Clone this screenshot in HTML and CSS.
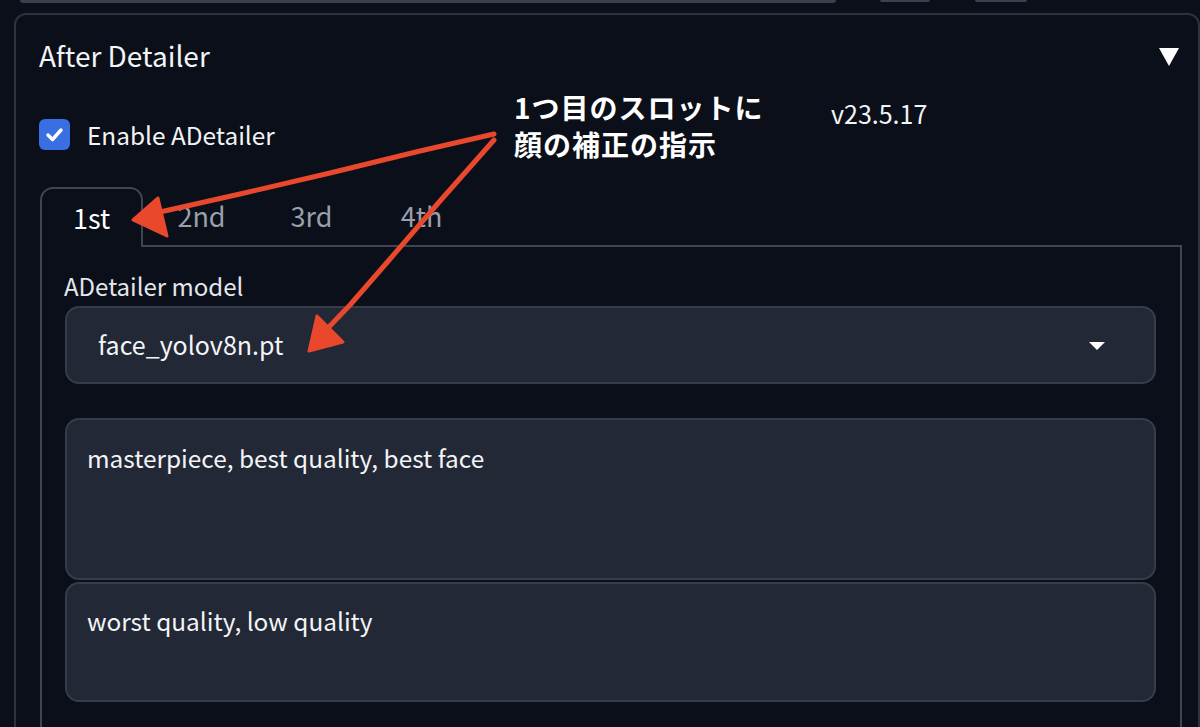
FILE: index.html
```html
<!DOCTYPE html>
<html lang="ja">
<head>
<meta charset="utf-8">
<title>After Detailer</title>
<link rel="stylesheet" href="styles.css">
</head>
<body>
<div class="topbar">
  <div class="top-input"></div>
  <div class="top-btn b1"></div>
  <div class="top-btn b2"></div>
</div>
<div class="panel">
  <div class="header">
    <span class="title">After Detailer</span>
    <svg class="caret" width="22" height="20" viewBox="0 0 22 20"><polygon points="1,1 21,1 11,19" fill="#ffffff"/></svg>
  </div>
  <div class="enable-row">
    <label class="check">
      <span class="box"><svg width="31" height="31" viewBox="0 0 31 31"><path d="M9 16 L13.5 20.5 L22 11" fill="none" stroke="#fff" stroke-width="3.4" stroke-linecap="round" stroke-linejoin="round"/></svg></span>
      <span class="check-label">Enable ADetailer</span>
    </label>
    <span class="version">v23.5.17</span>
  </div>
  <div class="tabs">
    <div class="tabnav">
      <div class="tab active">1st</div>
      <div class="tab">2nd</div>
      <div class="tab">3rd</div>
      <div class="tab">4th</div>
    </div>
    <div class="tabpanel">
      <div class="field-label">ADetailer model</div>
      <div class="dropdown">
        <span>face_yolov8n.pt</span>
        <svg width="18" height="10" viewBox="0 0 18 10"><polygon points="1,1 17,1 9,9" fill="#ffffff"/></svg>
      </div>
      <div class="textarea t1">masterpiece, best quality, best face</div>
      <div class="textarea t2">worst quality, low quality</div>
    </div>
  </div>
</div>

<div class="note">1つ目のスロットに<br>顔の補正の指示</div>
<svg class="arrows" width="1200" height="727" viewBox="0 0 1200 727">
  <g stroke="#e9482d" stroke-width="5" stroke-linecap="round" stroke-linejoin="round" fill="none">
    <path d="M494 134 L420 151 L330 173 L240 194 L160 212"/>
    <path d="M494 140 L440 201 L390 259 L350 305 L326 330"/>
  </g>
  <g fill="#e9482d" stroke="#e9482d" stroke-width="3" stroke-linejoin="round">
    <polygon points="133,220 158,198 167,236"/>
    <polygon points="317,316 343,342 309,351"/>
  </g>
</svg>
</body>
</html>
```
FILE: styles.css
```css
html, body {
  margin: 0;
  padding: 0;
}
body {
  width: 1200px;
  height: 727px;
  overflow: hidden;
  background: #0b0f19;
  color: #f3f4f6;
  font-family: "Noto Sans CJK JP", "Noto Sans", sans-serif;
  position: relative;
}
.topbar {
  display: flex;
  height: 3px;
}
.top-input {
  margin-left: 20px;
  width: 816px;
  height: 3px;
  background: #3a404c;
  border-radius: 0 0 6px 6px;
}
.top-btn {
  height: 2px;
  background: #3a404c;
  border-radius: 0 0 6px 6px;
}
.b1 { margin-left: 44px; width: 50px; }
.b2 { margin-left: 45px; width: 52px; }

.panel {
  margin: 10px 0 0 14px;
  width: 1186px;
  height: 760px;
  box-sizing: border-box;
  border: 2px solid #2c323e;
  border-radius: 12px;
  padding: 0 0 0 23px;
}
.header {
  display: flex;
  align-items: center;
  justify-content: space-between;
  height: 82px;
  padding-right: 18px;
}
.title {
  font-size: 28px;
  line-height: 34px;
  margin-top: -3px;
}
.caret { margin-top: 2px; }

.enable-row {
  display: flex;
  align-items: flex-start;
  height: 90px;
}
.check {
  display: flex;
  align-items: center;
  width: 792px;
  margin-top: 22px;
}
.box {
  width: 31px;
  height: 31px;
  border-radius: 6px;
  background: #3a6ee3;
  display: block;
}
.box svg { display: block; }
.check-label {
  font-size: 24.4px;
  margin-left: 17px;
  line-height: 31px;
}
.version {
  font-size: 25px;
  line-height: 30px;
  margin-top: 1px;
}

.tabs {
  margin-left: 1px;
  width: 1142px;
}
.tabnav {
  display: flex;
  height: 58px;
  border-bottom: 2px solid #3f4551;
}
.tab {
  width: 103px;
  margin-right: 7px;
  text-align: center;
  font-size: 27px;
  line-height: 58px;
  color: #9aa0ab;
  box-sizing: border-box;
}
.tab.active {
  color: #ffffff;
  border: 2px solid #3f4551;
  border-bottom: none;
  border-radius: 13px 13px 0 0;
  background: #0b0f19;
  height: 60px;
  margin-bottom: -2px;
  line-height: 58px;
}
.tabpanel {
  border-left: 2px solid #3f4551;
  border-right: 2px solid #3f4551;
  padding: 24px 24px 0 22px;
  height: 600px;
}
.field-label {
  font-size: 24px;
  line-height: 30px;
  color: #e5e7eb;
  margin-bottom: 5px;
}
.dropdown {
  height: 78px;
  box-sizing: border-box;
  border: 2px solid #363c49;
  border-radius: 14px;
  background: #222835;
  display: flex;
  align-items: center;
  justify-content: space-between;
  padding: 0 48px 0 31px;
  font-size: 25px;
  margin-left: 1px;
  margin-bottom: 34px;
}
.dropdown span { margin-top: -2px; }
.dropdown svg { margin-top: 1px; }
.textarea {
  box-sizing: border-box;
  border: 2px solid #363c49;
  border-radius: 14px;
  background: #222835;
  font-size: 24.4px;
  line-height: 34px;
  padding: 21px 20px;
  margin-left: 1px;
}
.t1 { height: 162px; margin-bottom: 2px; }
.t2 { height: 120px; padding-top: 20px; }

.note {
  position: absolute;
  left: 514px;
  top: 89px;
  font-size: 28px;
  font-weight: 700;
  line-height: 37px;
  color: #ffffff;
  letter-spacing: 1px;
}
.arrows {
  position: absolute;
  left: 0;
  top: 0;
  pointer-events: none;
}
```
